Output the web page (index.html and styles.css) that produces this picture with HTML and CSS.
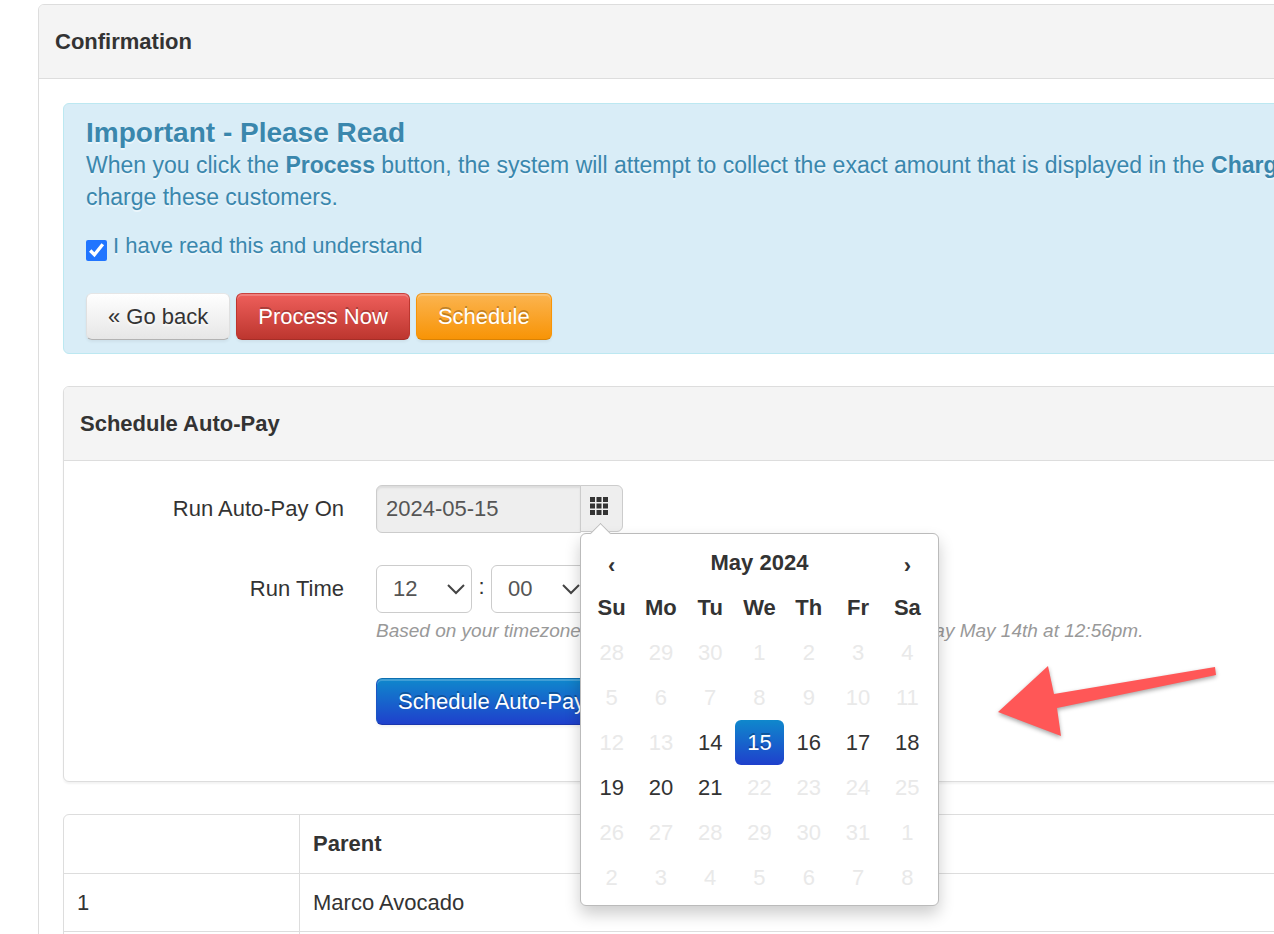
FILE: index.html
```html
<!DOCTYPE html>
<html lang="en">
<head>
    <meta charset="UTF-8">
    <meta name="viewport" content="width=device-width, initial-scale=1.0">
    <title>Confirmation</title>
    <link rel="stylesheet" href="styles.css">
</head>
<body>

<div class="box page-box">
    <div class="box-header"><h1>Confirmation</h1></div>
    <div class="box-content">

        <!-- Notice -->
        <div class="alert">
            <h2>Important - Please Read</h2>
            <p>When you click the <strong>Process</strong> button, the system will attempt to collect the exact amount that is displayed in the <strong>Charge</strong><br>charge these customers.</p>
            <div class="check-row">
                <input type="checkbox" id="agree" checked>
                <label for="agree">I have read this and understand</label>
            </div>
            <div class="buttons">
                <button type="button" class="btn">« Go back</button>
                <button type="button" class="btn btn-danger">Process Now</button>
                <button type="button" class="btn btn-warning">Schedule</button>
            </div>
        </div>

        <!-- Schedule form -->
        <div class="box schedule">
            <div class="box-header"><h2>Schedule Auto-Pay</h2></div>
            <form class="form">
                <label class="form-label" for="run-date">Run Auto-Pay On</label>
                <div class="date-group">
                    <input type="text" id="run-date" value="2024-05-15" readonly>
                    <button type="button" class="add-on" aria-label="Pick a date">
                        <svg width="18" height="18" viewBox="0 0 18 18">
                            <path d="M0 0h5v5H0zM6.5 0h5v5h-5zM13 0h5v5h-5zM0 6.5h5v5H0zM6.5 6.5h5v5h-5zM13 6.5h5v5h-5zM0 13h5v5H0zM6.5 13h5v5h-5zM13 13h5v5h-5z" fill="#333"/>
                        </svg>
                    </button>

                    <div class="datepicker">
                        <table>
                            <thead>
                                <tr>
                                    <th><button type="button" class="nav" aria-label="Previous month">‹</button></th>
                                    <th colspan="5">May 2024</th>
                                    <th><button type="button" class="nav" aria-label="Next month">›</button></th>
                                </tr>
                                <tr><th>Su</th><th>Mo</th><th>Tu</th><th>We</th><th>Th</th><th>Fr</th><th>Sa</th></tr>
                            </thead>
                            <tbody>
                                <tr><td class="off">28</td><td class="off">29</td><td class="off">30</td><td class="off">1</td><td class="off">2</td><td class="off">3</td><td class="off">4</td></tr>
                                <tr><td class="off">5</td><td class="off">6</td><td class="off">7</td><td class="off">8</td><td class="off">9</td><td class="off">10</td><td class="off">11</td></tr>
                                <tr><td class="off">12</td><td class="off">13</td><td>14</td><td class="active">15</td><td>16</td><td>17</td><td>18</td></tr>
                                <tr><td>19</td><td>20</td><td>21</td><td class="off">22</td><td class="off">23</td><td class="off">24</td><td class="off">25</td></tr>
                                <tr><td class="off">26</td><td class="off">27</td><td class="off">28</td><td class="off">29</td><td class="off">30</td><td class="off">31</td><td class="off">1</td></tr>
                                <tr><td class="off">2</td><td class="off">3</td><td class="off">4</td><td class="off">5</td><td class="off">6</td><td class="off">7</td><td class="off">8</td></tr>
                            </tbody>
                        </table>
                    </div>
                </div>

                <label class="form-label" for="run-hour">Run Time</label>
                <div class="time-field">
                    <div class="time-row">
                        <div class="select">
                            <select id="run-hour"><option>12</option></select>
                            <svg width="18" height="12" viewBox="0 0 18 12"><path d="M1 2l8 8 8-8" fill="none" stroke="#444" stroke-width="2"/></svg>
                        </div>
                        <span class="colon">:</span>
                        <div class="select">
                            <select id="run-minute" aria-label="Minute"><option>00</option></select>
                            <svg width="18" height="12" viewBox="0 0 18 12"><path d="M1 2l8 8 8-8" fill="none" stroke="#444" stroke-width="2"/></svg>
                        </div>
                    </div>
                    <p class="help">Based on your timezone, your current date and time is now: Tuesday May 14th at 12:56pm.</p>
                </div>

                <div class="actions">
                    <button type="button" class="btn btn-primary">Schedule Auto-Pay</button>
                </div>
            </form>

            <svg class="arrow" width="230" height="84" viewBox="0 0 230 84">
                <path d="M4 50L54 4l6 28L221 5l1 8L63 46l4 28z" fill="#ff5757"/>
            </svg>
        </div>

        <!-- Customers -->
        <div class="table-wrap">
            <table class="customers">
                <thead>
                    <tr><th></th><th>Parent</th></tr>
                </thead>
                <tbody>
                    <tr><td>1</td><td>Marco Avocado</td></tr>
                    <tr><td></td><td></td></tr>
                </tbody>
            </table>
        </div>
    </div>
</div>

</body>
</html>
```
FILE: styles.css
```css
/* Reset default margin and padding */
body, h1, h2, p {
    margin: 0;
    padding: 0;
}

* {
    box-sizing: border-box;
}

/* Global styles */
body {
    height: 100vh;
    overflow: hidden;
    padding: 4px 0 0 38px;
    background: #fff;
    color: #333;
    font-family: "Liberation Sans", Arial, sans-serif;
    font-size: 22px;
    line-height: 32px;
}

input, select, button {
    font-family: inherit;
    font-size: 22px;
    line-height: 32px;
}

/* Boxes */
.box {
    border: 1px solid #ddd;
    border-radius: 6px;
    background: #fff;
}

/* the page is wider than the window */
.page-box {
    margin-right: -60px;
}

.box-header {
    padding: 21px 16px 20px;
    background: #f4f4f4;
    border-bottom: 1px solid #ddd;
    border-radius: 5px 5px 0 0;
}

.box-header h1, .box-header h2 {
    font-size: 22px;
    line-height: 32px;
}

.box-content {
    padding: 24px;
}

/* Notice */
.alert {
    padding: 13px 22px;
    margin-bottom: 32px;
    background: #d9edf7;
    border: 1px solid #bce8f1;
    border-radius: 6px;
    color: #3a87ad;
    text-shadow: 0 2px 0 rgba(255, 255, 255, 0.5);
    white-space: nowrap;
}

.alert h2 {
    font-size: 28px;
    line-height: 32px;
}

.alert p {
    font-size: 23px;
}

.check-row {
    display: flex;
    gap: 6px;
    margin: 17px 0 31px;
}

.check-row input {
    width: 21px;
    height: 21px;
    margin: 10px 0 0;
    accent-color: #2175ff;
}

.buttons {
    display: flex;
    gap: 6px;
}

/* Buttons */
.btn {
    height: 47px;
    padding: 0 21px;
    border: 1px solid #ccc;
    border-color: #e6e6e6 #e0e0e0 #b3b3b3;
    border-radius: 6px;
    background: linear-gradient(#fff, #e6e6e6) border-box;
    box-shadow: inset 0 2px 0 rgba(255, 255, 255, 0.2), 0 2px 3px rgba(0, 0, 0, 0.05);
    color: #333;
    text-shadow: 0 2px 2px rgba(255, 255, 255, 0.75);
    cursor: pointer;
}

.btn-danger, .btn-warning, .btn-primary {
    color: #fff;
    text-shadow: 0 -2px 0 rgba(0, 0, 0, 0.25);
}

.btn-danger {
    background: linear-gradient(#ee5f5b, #bd362f);
    border-color: #c9423e #bd362f #a52e28;
}

.btn-warning {
    background: linear-gradient(#fbb450, #f89406);
    border-color: #e39a35 #f89406 #d98205;
}

.btn-primary {
    background: linear-gradient(#0f88cc, #1f40cc);
    border-color: #0c6fb0 #1b55c4 #1a36ad;
}

/* Schedule form */
.schedule {
    position: relative;
    margin-bottom: 32px;
    box-shadow: 0 2px 2px rgba(0, 0, 0, 0.05);
}

.form {
    display: grid;
    grid-template-columns: 280px 1fr;
    column-gap: 32px;
    padding: 24px 0 56px;
}

.form-label {
    padding-top: 8px;
    text-align: right;
}

.date-group {
    position: relative;
    display: flex;
    justify-self: start;
    height: 48px;
    margin-bottom: 32px;
}

.date-group input {
    width: 205px;
    padding: 0 9px;
    border: 1px solid #ccc;
    border-radius: 6px 0 0 6px;
    background: #eee;
    box-shadow: inset 0 2px 2px rgba(0, 0, 0, 0.075);
    color: #555;
}

.add-on {
    width: 43px;
    height: 47px;
    margin-left: -1px;
    padding: 0 6px 5px 0;
    border: 1px solid #ccc;
    border-radius: 0 6px 6px 0;
    background: #eee;
    line-height: 0;
}

.time-row {
    display: flex;
}

.select {
    position: relative;
}

.select select {
    width: 96px;
    height: 48px;
    padding: 0 16px;
    appearance: none;
    border: 1px solid #ccc;
    border-radius: 6px;
    background: #fff;
    color: #555;
}

.select svg {
    position: absolute;
    right: 7px;
    top: 18px;
    pointer-events: none;
}

.colon {
    width: 19px;
    padding-top: 6px;
    text-align: center;
}

.help {
    padding-top: 2px;
    color: #999;
    font-size: 19px;
    font-style: italic;
    white-space: nowrap;
}

.actions {
    grid-column: 2;
    display: flex;
    padding-top: 31px;
}

/* Datepicker popup */
.datepicker {
    position: absolute;
    z-index: 10;
    top: 48px;
    left: 204px;
    padding: 6px 6px 5px;
    border: 1px solid #bbb;
    border-radius: 6px;
    background: #fff;
    box-shadow: 0 8px 16px rgba(0, 0, 0, 0.2);
}

/* little pointer at the top of the popup */
.datepicker::before {
    content: "";
    position: absolute;
    top: -8px;
    left: 12px;
    width: 14px;
    height: 14px;
    border: 1px solid #bbb;
    border-width: 1px 0 0 1px;
    background: #fff;
    transform: rotate(45deg);
}

.datepicker table {
    width: 345px;
    table-layout: fixed;
    border-spacing: 0;
}

.datepicker th, .datepicker td {
    height: 45px;
    padding: 0;
    border-radius: 6px;
    text-align: center;
}

.datepicker .off {
    color: #e9e9e9;
}

.datepicker .active {
    background: linear-gradient(#0f88cc, #1f40cc);
    color: #fff;
    text-shadow: 0 -2px 0 rgba(0, 0, 0, 0.25);
}

.nav {
    padding: 6px 0 0;
    border: 0;
    background: none;
    color: #333;
    font-weight: bold;
}

/* Pointer arrow over the form */
.arrow {
    position: absolute;
    top: 275px;
    left: 930px;
    filter: drop-shadow(0 2px 2px rgba(0, 0, 0, 0.35));
}

/* Customer table */
.table-wrap {
    border: 1px solid #ddd;
    border-radius: 6px;
}

.customers {
    width: 100%;
    border-spacing: 0;
}

.customers th, .customers td {
    height: 58px;
    padding: 0 13px;
    border-top: 1px solid #ddd;
    border-left: 1px solid #ddd;
    text-align: left;
}

.customers thead th {
    border-top: 0;
}

.customers th:first-child, .customers td:first-child {
    width: 235px;
    border-left: 0;
}
```
